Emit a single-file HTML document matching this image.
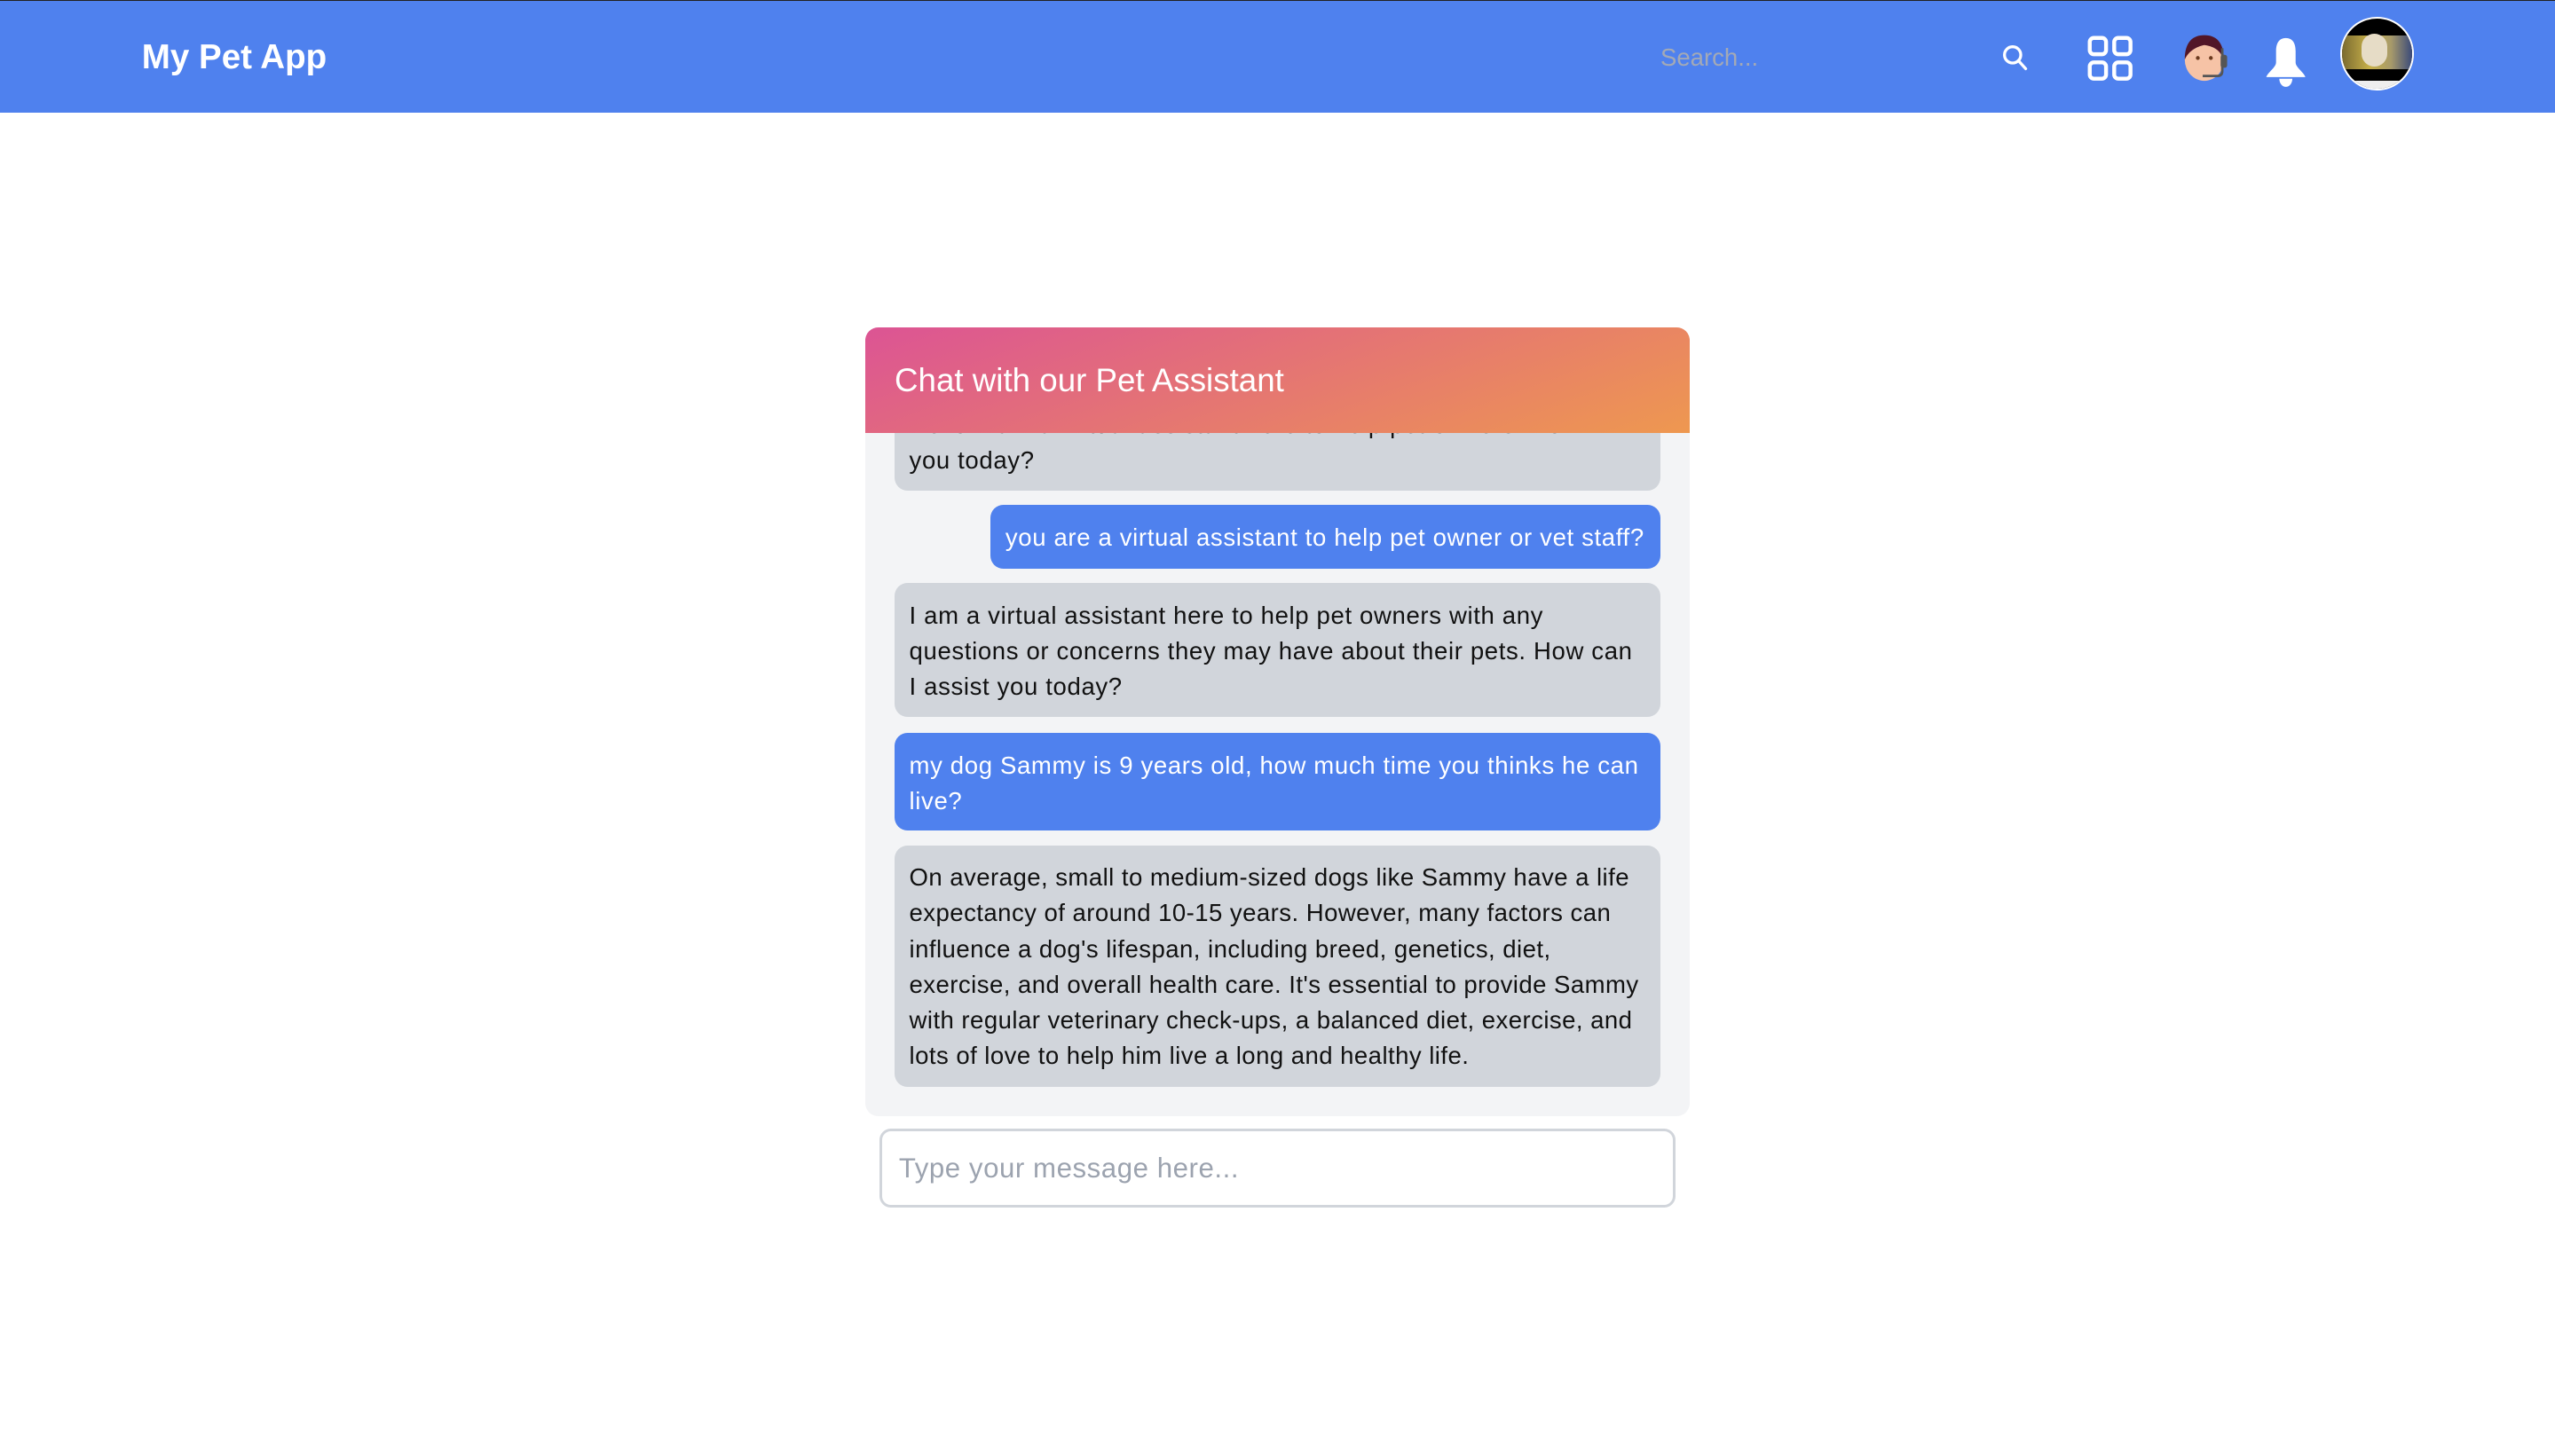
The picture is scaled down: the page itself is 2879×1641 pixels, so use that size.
<!DOCTYPE html>
<html><head><meta charset="utf-8"><style>
html,body{margin:0;padding:0;background:#fff;overflow:hidden}
#w{zoom:1.83610;width:1568px;height:894px;position:relative;font-family:"Liberation Sans",sans-serif}
.nav{position:absolute;left:0;top:0;width:1568px;height:69px;background:#4f81ee;border-top:1px solid #222;box-sizing:border-box}
.abs{position:absolute}
.chat{position:absolute;left:531px;top:201px;width:506px;height:484px;background:#f3f4f6;border-radius:8px;overflow:hidden}
.hdr{position:absolute;left:0;top:0;width:506px;height:65px;background:linear-gradient(160deg,#dc5494,#ee9850);z-index:2}
.b{position:absolute;box-sizing:border-box;padding:9px 9px;font-size:15px;line-height:21.8px;border-radius:8px;color:#111;letter-spacing:0.35px}
.g{background:#d1d5db}
.bl{background:#4f81ee;color:#fff}
</style></head><body><div id="w">
<div class="nav">
 <div class="abs" style="left:87px;top:23px;font-size:21px;font-weight:bold;color:#fff">My Pet App</div>
 <div class="abs" style="left:1019px;top:26px;font-size:15px;color:#a3a9b6">Search...</div>
 <svg class="abs" style="left:1228px;top:26px" width="18" height="18" viewBox="0 0 18 18"><circle cx="7" cy="7" r="5" fill="none" stroke="#fff" stroke-width="1.8"/><path d="M10.5 10.5L15 15.5" stroke="#fff" stroke-width="1.8" stroke-linecap="round"/></svg>
 <svg class="abs" style="left:1281px;top:21px" width="28" height="28" viewBox="0 0 28 28"><g fill="none" stroke="#fff" stroke-width="2.4"><rect x="1.5" y="1.5" width="10" height="10" rx="2.5"/><rect x="16.5" y="1.5" width="10" height="10" rx="2.5"/><rect x="1.5" y="16.5" width="10" height="10" rx="2.5"/><rect x="16.5" y="16.5" width="10" height="10" rx="2.5"/></g></svg>
 <svg class="abs" style="left:1340px;top:19px" width="28" height="32" viewBox="0 0 28 32"><ellipse cx="13" cy="17" rx="12" ry="13" fill="#f6c3a6"/><path d="M1 17C1 6 6 2 13 2s12 4 12 15c-2-5-5-8-12-9C8 9 3 12 1 17z" fill="#521628"/><circle cx="9" cy="16" r="1.2" fill="#6b3a1e"/><circle cx="17" cy="16" r="1.2" fill="#6b3a1e"/><path d="M24 10v14q0 3-3 3h-9" fill="none" stroke="#555" stroke-width="1.5"/><rect x="23" y="14" width="4" height="8" rx="1.5" fill="#555"/></svg>
 <svg class="abs" style="left:1389px;top:22px" width="28" height="32" viewBox="0 0 28 32"><path d="M14 1c4 0 6 3 6 8v7c0 3 5 6 6 9H2c1-3 6-6 6-9V9c0-5 2-8 6-8z" fill="#fff"/><path d="M10 26h8a4 5 0 0 1-8 0z" fill="#fff"/></svg>
 <div class="abs" style="left:1436px;top:10px;width:43px;height:43px;border-radius:50%;border:1.5px solid #fff;background:#000;overflow:hidden">
  <div style="position:absolute;left:0;top:10px;width:43px;height:21px;background:linear-gradient(90deg,#7a6a30,#c9b24a 40%,#a79a6a 70%,#3a4a7a)"></div>
  <div style="position:absolute;left:12px;top:9px;width:16px;height:20px;border-radius:8px;background:#e6dcc6"></div>
  <div style="position:absolute;left:0;top:38px;width:43px;height:6px;background:#eee"></div>
 </div>
</div>
<div class="chat">
 <div class="hdr"><div class="abs" style="left:18px;top:21px;font-size:20px;color:#fff">Chat with our Pet Assistant</div></div>
 <div class="b g" style="left:18px;top:13px;width:470px;height:87px;padding-top:36px;white-space:nowrap">Hello! I am a virtual assistant here to help pet owners. How<br>you today?</div>
 <div class="b bl" style="left:77px;top:109px;width:411px;height:39px">you are a virtual assistant to help pet owner or vet staff?</div>
 <div class="b g" style="left:18px;top:157px;width:470px;height:82px">I am a virtual assistant here to help pet owners with any questions or concerns they may have about their pets. How can I assist you today?</div>
 <div class="b bl" style="left:18px;top:249px;width:470px;height:60px">my dog Sammy is 9 years old, how much time you thinks he can live?</div>
 <div class="b g" style="left:18px;top:318px;width:470px;height:148px;letter-spacing:0.25px">On average, small to medium-sized dogs like Sammy have a life expectancy of around 10-15 years. However, many factors can influence a dog's lifespan, including breed, genetics, diet, exercise, and overall health care. It's essential to provide Sammy with regular veterinary check-ups, a balanced diet, exercise, and lots of love to help him live a long and healthy life.</div>
</div>
<div class="abs" style="left:540px;top:693px;width:488px;height:48px;box-sizing:border-box;border:2px solid #d1d5db;border-radius:7px;background:#fff">
 <div class="abs" style="left:10px;top:13px;font-size:17px;color:#9ca3af;letter-spacing:0.3px">Type your message here...</div>
</div>
</div></body></html>
